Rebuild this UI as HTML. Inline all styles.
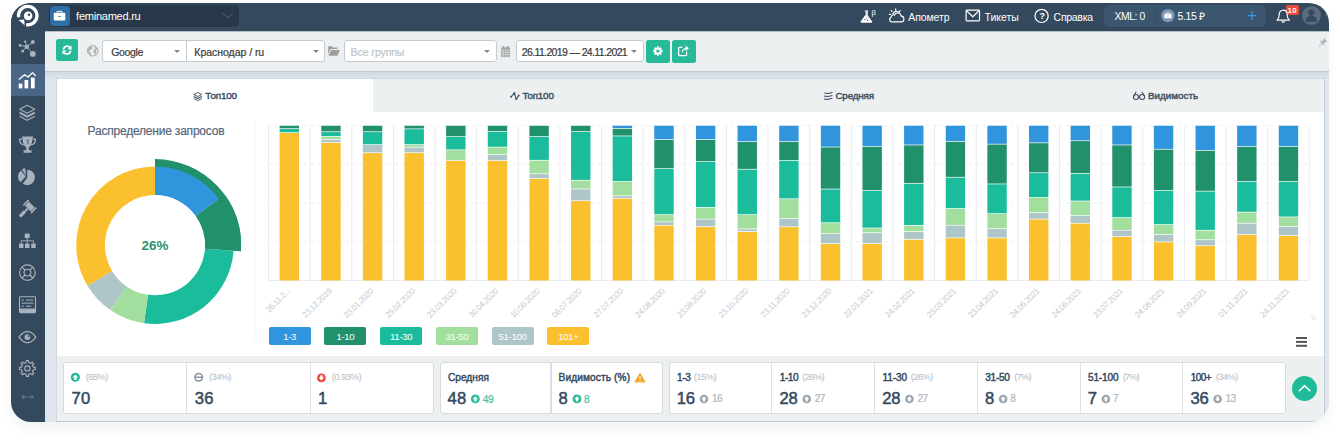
<!DOCTYPE html>
<html lang="ru">
<head>
<meta charset="utf-8">
<title>feminamed.ru — Топ100</title>
<style>
*{box-sizing:border-box;margin:0;padding:0}
html,body{width:1340px;height:442px;background:#fff;overflow:hidden}
body{position:relative;font-family:"Liberation Sans",sans-serif;color:#34495e}
.shadow{position:absolute;left:11px;top:3px;width:1318px;height:418.9px;border-radius:20px;background:#fff;box-shadow:0 8px 14px -3px rgba(40,60,80,.08)}
.clip{position:absolute;left:0;top:0;width:1340px;height:442px;clip-path:inset(3px 11px 20.1px 11px round 20px)}
.abs{position:absolute}
.topbar{left:0;top:0;width:1340px;height:31.3px;background:#34495e}
.sidebar{left:0;top:0;width:45px;height:442px;background:#34495e}
.side-active{left:11px;top:64px;width:34px;height:31.5px;background:#4a6585}
.content{left:45px;top:31px;width:1295px;height:411px;background:#dfe6ed}
.toolbar{left:45px;top:31px;width:1295px;height:41px;background:#ecf0f1;border-bottom:1px solid #bfc8d1}
.toolshadow{left:45px;top:72px;width:1295px;height:7px;background:linear-gradient(#d0d9e2,#dde4ec)}
.panel{left:56px;top:78px;width:1269px;height:344px;background:#ecf0f1;border:1px solid #d0d9e1;border-right-color:#c3ced8;border-bottom-color:#bdc8d3}
.white{left:57px;top:79px;width:1267px;height:276.5px;background:#fff}
.tab{top:79px;height:33px;background:#ecf0f1}
.t{position:absolute;white-space:nowrap;line-height:1}
.pill{left:49px;top:5px;width:190px;height:22px;border-radius:5px;background:#27384a}
.brief{left:49.5px;top:5.5px;width:20px;height:20px;border-radius:4px;background:#2f6fa5}
.xml{left:1104px;top:5px;width:161.5px;height:22px;border-radius:6px;background:#3c5670}
.sel{top:40px;height:22.4px;background:#fff;border:1px solid #c4cbd2}
.gbtn{background:#26b99a;border-radius:2.5px}
.caret{position:absolute;width:0;height:0;border-left:3.7px solid transparent;border-right:3.7px solid transparent;border-top:3.9px solid #858585}
.leg{top:327.2px;width:42px;height:18.2px;border-radius:2px;color:#fff;font-size:9.6px;letter-spacing:-.35px;text-align:center;line-height:19.2px}
.box{top:362.2px;height:52.3px;background:#fff;border:1px solid #d6dadd;border-radius:3px}
.vd{top:363px;width:1.3px;height:51px;background:#dcdfe1}
.big{font-size:16.5px;font-weight:bold;color:#34495e}
.lbl{font-size:10.5px;font-weight:bold;color:#34495e}
.pct{font-size:9.5px;color:#b4bcc3}
.sm{font-size:10px;color:#a9b1b8}
</style>
</head>
<body>
<div class="shadow"></div>
<div class="clip">
<div class="abs content"></div>
<div class="abs toolbar"></div>
<div class="abs toolshadow"></div>
<div class="abs topbar"></div>
<div class="abs" style="left:45px;top:31px;width:1295px;height:1px;background:#b4bdc5"></div>
<div class="abs sidebar"></div>
<div class="abs side-active"></div>

<!-- top bar -->
<div class="abs pill"></div>
<div class="abs brief"></div>
<div class="abs xml"></div>
<div class="abs" style="left:1155.5px;top:9px;width:1px;height:14px;background:#34495e"></div>
<div class="abs" style="left:1285.5px;top:5px;width:13px;height:10px;border-radius:2px;background:#e74c3c"></div>
<div class="abs" style="left:1301.8px;top:6px;width:19.2px;height:19.2px;border-radius:50%;background:#5b6b7c"></div>

<!-- toolbar -->
<div class="abs gbtn" style="left:56px;top:39px;width:22px;height:22px"></div>
<div class="abs sel" style="left:102px;width:84.5px;border-radius:3px 0 0 3px"></div>
<div class="abs sel" style="left:185.5px;width:139.5px;border-radius:0 3px 3px 0"></div>
<div class="caret" style="left:173.8px;top:49.7px"></div>
<div class="caret" style="left:312.6px;top:49.7px"></div>
<div class="abs sel" style="left:344px;width:153px;border-radius:3px"></div>
<div class="caret" style="left:484px;top:49.7px"></div>
<div class="abs sel" style="left:516px;width:128px;border-radius:3px"></div>
<div class="caret" style="left:631px;top:49.7px"></div>
<div class="abs gbtn" style="left:646px;top:39.5px;width:24px;height:23px"></div>
<div class="abs gbtn" style="left:672px;top:39.5px;width:23.5px;height:23px"></div>

<!-- panel -->
<div class="abs panel"></div>
<div class="abs white"></div>
<div class="abs tab" style="left:373.3px;width:950.7px"></div>

<div class="abs" style="left:254px;top:120px;width:1px;height:221px;background:#f0f2f3"></div>

<svg class="chart" width="1340" height="442" viewBox="0 0 1340 442" style="position:absolute;left:0;top:0">
<line x1="268.50" y1="125.8" x2="268.50" y2="280.5" stroke="#e9ecee" stroke-width="1"/>
<line x1="310.13" y1="125.8" x2="310.13" y2="280.5" stroke="#e9ecee" stroke-width="1"/>
<line x1="351.76" y1="125.8" x2="351.76" y2="280.5" stroke="#e9ecee" stroke-width="1"/>
<line x1="393.40" y1="125.8" x2="393.40" y2="280.5" stroke="#e9ecee" stroke-width="1"/>
<line x1="435.03" y1="125.8" x2="435.03" y2="280.5" stroke="#e9ecee" stroke-width="1"/>
<line x1="476.66" y1="125.8" x2="476.66" y2="280.5" stroke="#e9ecee" stroke-width="1"/>
<line x1="518.29" y1="125.8" x2="518.29" y2="280.5" stroke="#e9ecee" stroke-width="1"/>
<line x1="559.92" y1="125.8" x2="559.92" y2="280.5" stroke="#e9ecee" stroke-width="1"/>
<line x1="601.56" y1="125.8" x2="601.56" y2="280.5" stroke="#e9ecee" stroke-width="1"/>
<line x1="643.19" y1="125.8" x2="643.19" y2="280.5" stroke="#e9ecee" stroke-width="1"/>
<line x1="684.82" y1="125.8" x2="684.82" y2="280.5" stroke="#e9ecee" stroke-width="1"/>
<line x1="726.45" y1="125.8" x2="726.45" y2="280.5" stroke="#e9ecee" stroke-width="1"/>
<line x1="768.08" y1="125.8" x2="768.08" y2="280.5" stroke="#e9ecee" stroke-width="1"/>
<line x1="809.72" y1="125.8" x2="809.72" y2="280.5" stroke="#e9ecee" stroke-width="1"/>
<line x1="851.35" y1="125.8" x2="851.35" y2="280.5" stroke="#e9ecee" stroke-width="1"/>
<line x1="892.98" y1="125.8" x2="892.98" y2="280.5" stroke="#e9ecee" stroke-width="1"/>
<line x1="934.61" y1="125.8" x2="934.61" y2="280.5" stroke="#e9ecee" stroke-width="1"/>
<line x1="976.24" y1="125.8" x2="976.24" y2="280.5" stroke="#e9ecee" stroke-width="1"/>
<line x1="1017.88" y1="125.8" x2="1017.88" y2="280.5" stroke="#e9ecee" stroke-width="1"/>
<line x1="1059.51" y1="125.8" x2="1059.51" y2="280.5" stroke="#e9ecee" stroke-width="1"/>
<line x1="1101.14" y1="125.8" x2="1101.14" y2="280.5" stroke="#e9ecee" stroke-width="1"/>
<line x1="1142.77" y1="125.8" x2="1142.77" y2="280.5" stroke="#e9ecee" stroke-width="1"/>
<line x1="1184.40" y1="125.8" x2="1184.40" y2="280.5" stroke="#e9ecee" stroke-width="1"/>
<line x1="1226.04" y1="125.8" x2="1226.04" y2="280.5" stroke="#e9ecee" stroke-width="1"/>
<line x1="1267.67" y1="125.8" x2="1267.67" y2="280.5" stroke="#e9ecee" stroke-width="1"/>
<line x1="1309.30" y1="125.8" x2="1309.30" y2="280.5" stroke="#e9ecee" stroke-width="1"/>
<line x1="268.5" y1="125.75" x2="1309.3" y2="125.75" stroke="#eaedef" stroke-width="1" stroke-dasharray="3 4"/>
<line x1="268.5" y1="164.44" x2="1309.3" y2="164.44" stroke="#eaedef" stroke-width="1" stroke-dasharray="3 4"/>
<line x1="268.5" y1="203.12" x2="1309.3" y2="203.12" stroke="#eaedef" stroke-width="1" stroke-dasharray="3 4"/>
<line x1="268.5" y1="241.81" x2="1309.3" y2="241.81" stroke="#eaedef" stroke-width="1" stroke-dasharray="3 4"/>
<line x1="268.5" y1="280.50" x2="1309.3" y2="280.50" stroke="#eaedef" stroke-width="1"/>
<rect x="279.62" y="125.75" width="19.4" height="2.55" fill="#21916c"/>
<rect x="279.62" y="129.00" width="19.4" height="3.30" fill="#1bbc9b"/>
<rect x="279.62" y="133.00" width="19.4" height="147.50" fill="#fbc02d"/>
<text x="290.52" y="291.70" text-anchor="end" transform="rotate(-45 290.52 291.70)" font-size="8.4" letter-spacing="-0.42" fill="#c6cacf" font-family="Liberation Sans, sans-serif">26.11.2...</text>
<rect x="321.25" y="125.75" width="19.4" height="5.65" fill="#21916c"/>
<rect x="321.25" y="132.10" width="19.4" height="4.00" fill="#1bbc9b"/>
<rect x="321.25" y="136.80" width="19.4" height="2.30" fill="#a2de9e"/>
<rect x="321.25" y="139.80" width="19.4" height="2.40" fill="#aec6c7"/>
<rect x="321.25" y="142.90" width="19.4" height="137.60" fill="#fbc02d"/>
<text x="332.15" y="291.70" text-anchor="end" transform="rotate(-45 332.15 291.70)" font-size="8.4" letter-spacing="-0.42" fill="#c6cacf" font-family="Liberation Sans, sans-serif">23.12.2019</text>
<rect x="362.88" y="125.75" width="19.4" height="5.65" fill="#21916c"/>
<rect x="362.88" y="132.10" width="19.4" height="12.20" fill="#1bbc9b"/>
<rect x="362.88" y="145.00" width="19.4" height="7.40" fill="#aec6c7"/>
<rect x="362.88" y="153.10" width="19.4" height="127.40" fill="#fbc02d"/>
<text x="373.78" y="291.70" text-anchor="end" transform="rotate(-45 373.78 291.70)" font-size="8.4" letter-spacing="-0.42" fill="#c6cacf" font-family="Liberation Sans, sans-serif">23.01.2020</text>
<rect x="404.51" y="125.75" width="19.4" height="2.75" fill="#21916c"/>
<rect x="404.51" y="129.20" width="19.4" height="15.10" fill="#1bbc9b"/>
<rect x="404.51" y="145.00" width="19.4" height="1.90" fill="#a2de9e"/>
<rect x="404.51" y="147.60" width="19.4" height="4.80" fill="#aec6c7"/>
<rect x="404.51" y="153.10" width="19.4" height="127.40" fill="#fbc02d"/>
<text x="415.41" y="291.70" text-anchor="end" transform="rotate(-45 415.41 291.70)" font-size="8.4" letter-spacing="-0.42" fill="#c6cacf" font-family="Liberation Sans, sans-serif">25.02.2020</text>
<rect x="446.14" y="125.75" width="19.4" height="10.55" fill="#21916c"/>
<rect x="446.14" y="137.00" width="19.4" height="12.50" fill="#1bbc9b"/>
<rect x="446.14" y="150.20" width="19.4" height="10.00" fill="#a2de9e"/>
<rect x="446.14" y="160.90" width="19.4" height="119.60" fill="#fbc02d"/>
<text x="457.04" y="291.70" text-anchor="end" transform="rotate(-45 457.04 291.70)" font-size="8.4" letter-spacing="-0.42" fill="#c6cacf" font-family="Liberation Sans, sans-serif">23.03.2020</text>
<rect x="487.78" y="125.75" width="19.4" height="5.45" fill="#21916c"/>
<rect x="487.78" y="131.90" width="19.4" height="14.90" fill="#1bbc9b"/>
<rect x="487.78" y="147.50" width="19.4" height="6.70" fill="#a2de9e"/>
<rect x="487.78" y="154.90" width="19.4" height="5.30" fill="#aec6c7"/>
<rect x="487.78" y="160.90" width="19.4" height="119.60" fill="#fbc02d"/>
<text x="498.68" y="291.70" text-anchor="end" transform="rotate(-45 498.68 291.70)" font-size="8.4" letter-spacing="-0.42" fill="#c6cacf" font-family="Liberation Sans, sans-serif">30.04.2020</text>
<rect x="529.41" y="125.75" width="19.4" height="10.45" fill="#21916c"/>
<rect x="529.41" y="136.90" width="19.4" height="23.00" fill="#1bbc9b"/>
<rect x="529.41" y="160.60" width="19.4" height="12.80" fill="#a2de9e"/>
<rect x="529.41" y="174.10" width="19.4" height="4.10" fill="#aec6c7"/>
<rect x="529.41" y="178.90" width="19.4" height="101.60" fill="#fbc02d"/>
<text x="540.31" y="291.70" text-anchor="end" transform="rotate(-45 540.31 291.70)" font-size="8.4" letter-spacing="-0.42" fill="#c6cacf" font-family="Liberation Sans, sans-serif">10.06.2020</text>
<rect x="571.04" y="125.75" width="19.4" height="5.45" fill="#21916c"/>
<rect x="571.04" y="131.90" width="19.4" height="48.00" fill="#1bbc9b"/>
<rect x="571.04" y="180.60" width="19.4" height="8.00" fill="#a2de9e"/>
<rect x="571.04" y="189.30" width="19.4" height="11.10" fill="#aec6c7"/>
<rect x="571.04" y="201.10" width="19.4" height="79.40" fill="#fbc02d"/>
<text x="581.94" y="291.70" text-anchor="end" transform="rotate(-45 581.94 291.70)" font-size="8.4" letter-spacing="-0.42" fill="#c6cacf" font-family="Liberation Sans, sans-serif">06.07.2020</text>
<rect x="612.67" y="125.75" width="19.4" height="2.35" fill="#3095dc"/>
<rect x="612.67" y="128.80" width="19.4" height="6.80" fill="#21916c"/>
<rect x="612.67" y="136.30" width="19.4" height="44.90" fill="#1bbc9b"/>
<rect x="612.67" y="181.90" width="19.4" height="13.60" fill="#a2de9e"/>
<rect x="612.67" y="196.20" width="19.4" height="1.90" fill="#aec6c7"/>
<rect x="612.67" y="198.80" width="19.4" height="81.70" fill="#fbc02d"/>
<text x="623.57" y="291.70" text-anchor="end" transform="rotate(-45 623.57 291.70)" font-size="8.4" letter-spacing="-0.42" fill="#c6cacf" font-family="Liberation Sans, sans-serif">27.07.2020</text>
<rect x="654.30" y="125.75" width="19.4" height="13.45" fill="#3095dc"/>
<rect x="654.30" y="139.90" width="19.4" height="28.40" fill="#21916c"/>
<rect x="654.30" y="169.00" width="19.4" height="45.30" fill="#1bbc9b"/>
<rect x="654.30" y="215.00" width="19.4" height="6.50" fill="#a2de9e"/>
<rect x="654.30" y="222.20" width="19.4" height="2.80" fill="#aec6c7"/>
<rect x="654.30" y="225.70" width="19.4" height="54.80" fill="#fbc02d"/>
<text x="665.20" y="291.70" text-anchor="end" transform="rotate(-45 665.20 291.70)" font-size="8.4" letter-spacing="-0.42" fill="#c6cacf" font-family="Liberation Sans, sans-serif">24.08.2020</text>
<rect x="695.94" y="125.75" width="19.4" height="13.45" fill="#3095dc"/>
<rect x="695.94" y="139.90" width="19.4" height="21.40" fill="#21916c"/>
<rect x="695.94" y="162.00" width="19.4" height="45.10" fill="#1bbc9b"/>
<rect x="695.94" y="207.80" width="19.4" height="11.00" fill="#a2de9e"/>
<rect x="695.94" y="219.50" width="19.4" height="6.90" fill="#aec6c7"/>
<rect x="695.94" y="227.10" width="19.4" height="53.40" fill="#fbc02d"/>
<text x="706.84" y="291.70" text-anchor="end" transform="rotate(-45 706.84 291.70)" font-size="8.4" letter-spacing="-0.42" fill="#c6cacf" font-family="Liberation Sans, sans-serif">23.09.2020</text>
<rect x="737.57" y="125.75" width="19.4" height="15.55" fill="#3095dc"/>
<rect x="737.57" y="142.00" width="19.4" height="26.90" fill="#21916c"/>
<rect x="737.57" y="169.60" width="19.4" height="44.70" fill="#1bbc9b"/>
<rect x="737.57" y="215.00" width="19.4" height="13.60" fill="#a2de9e"/>
<rect x="737.57" y="229.30" width="19.4" height="2.00" fill="#aec6c7"/>
<rect x="737.57" y="232.00" width="19.4" height="48.50" fill="#fbc02d"/>
<text x="748.47" y="291.70" text-anchor="end" transform="rotate(-45 748.47 291.70)" font-size="8.4" letter-spacing="-0.42" fill="#c6cacf" font-family="Liberation Sans, sans-serif">23.10.2020</text>
<rect x="779.20" y="125.75" width="19.4" height="15.35" fill="#3095dc"/>
<rect x="779.20" y="141.80" width="19.4" height="18.20" fill="#21916c"/>
<rect x="779.20" y="160.70" width="19.4" height="37.75" fill="#1bbc9b"/>
<rect x="779.20" y="199.15" width="19.4" height="19.05" fill="#a2de9e"/>
<rect x="779.20" y="218.90" width="19.4" height="7.55" fill="#aec6c7"/>
<rect x="779.20" y="227.15" width="19.4" height="53.35" fill="#fbc02d"/>
<text x="790.10" y="291.70" text-anchor="end" transform="rotate(-45 790.10 291.70)" font-size="8.4" letter-spacing="-0.42" fill="#c6cacf" font-family="Liberation Sans, sans-serif">23.11.2020</text>
<rect x="820.83" y="125.75" width="19.4" height="20.95" fill="#3095dc"/>
<rect x="820.83" y="147.40" width="19.4" height="41.30" fill="#21916c"/>
<rect x="820.83" y="189.40" width="19.4" height="33.00" fill="#1bbc9b"/>
<rect x="820.83" y="223.10" width="19.4" height="10.20" fill="#a2de9e"/>
<rect x="820.83" y="234.00" width="19.4" height="9.30" fill="#aec6c7"/>
<rect x="820.83" y="244.00" width="19.4" height="36.50" fill="#fbc02d"/>
<text x="831.73" y="291.70" text-anchor="end" transform="rotate(-45 831.73 291.70)" font-size="8.4" letter-spacing="-0.42" fill="#c6cacf" font-family="Liberation Sans, sans-serif">23.12.2020</text>
<rect x="862.46" y="125.75" width="19.4" height="20.35" fill="#3095dc"/>
<rect x="862.46" y="146.80" width="19.4" height="43.40" fill="#21916c"/>
<rect x="862.46" y="190.90" width="19.4" height="36.80" fill="#1bbc9b"/>
<rect x="862.46" y="228.40" width="19.4" height="4.00" fill="#a2de9e"/>
<rect x="862.46" y="233.10" width="19.4" height="10.20" fill="#aec6c7"/>
<rect x="862.46" y="244.00" width="19.4" height="36.50" fill="#fbc02d"/>
<text x="873.36" y="291.70" text-anchor="end" transform="rotate(-45 873.36 291.70)" font-size="8.4" letter-spacing="-0.42" fill="#c6cacf" font-family="Liberation Sans, sans-serif">22.01.2021</text>
<rect x="904.10" y="125.75" width="19.4" height="18.85" fill="#3095dc"/>
<rect x="904.10" y="145.30" width="19.4" height="37.90" fill="#21916c"/>
<rect x="904.10" y="183.90" width="19.4" height="41.10" fill="#1bbc9b"/>
<rect x="904.10" y="225.70" width="19.4" height="5.60" fill="#a2de9e"/>
<rect x="904.10" y="232.00" width="19.4" height="7.10" fill="#aec6c7"/>
<rect x="904.10" y="239.80" width="19.4" height="40.70" fill="#fbc02d"/>
<text x="915.00" y="291.70" text-anchor="end" transform="rotate(-45 915.00 291.70)" font-size="8.4" letter-spacing="-0.42" fill="#c6cacf" font-family="Liberation Sans, sans-serif">24.02.2021</text>
<rect x="945.73" y="125.75" width="19.4" height="15.35" fill="#3095dc"/>
<rect x="945.73" y="141.80" width="19.4" height="35.10" fill="#21916c"/>
<rect x="945.73" y="177.60" width="19.4" height="30.60" fill="#1bbc9b"/>
<rect x="945.73" y="208.90" width="19.4" height="16.00" fill="#a2de9e"/>
<rect x="945.73" y="225.60" width="19.4" height="11.90" fill="#aec6c7"/>
<rect x="945.73" y="238.20" width="19.4" height="42.30" fill="#fbc02d"/>
<text x="956.63" y="291.70" text-anchor="end" transform="rotate(-45 956.63 291.70)" font-size="8.4" letter-spacing="-0.42" fill="#c6cacf" font-family="Liberation Sans, sans-serif">23.03.2021</text>
<rect x="987.36" y="125.75" width="19.4" height="18.05" fill="#3095dc"/>
<rect x="987.36" y="144.50" width="19.4" height="39.10" fill="#21916c"/>
<rect x="987.36" y="184.30" width="19.4" height="29.00" fill="#1bbc9b"/>
<rect x="987.36" y="214.00" width="19.4" height="14.35" fill="#a2de9e"/>
<rect x="987.36" y="229.05" width="19.4" height="8.45" fill="#aec6c7"/>
<rect x="987.36" y="238.20" width="19.4" height="42.30" fill="#fbc02d"/>
<text x="998.26" y="291.70" text-anchor="end" transform="rotate(-45 998.26 291.70)" font-size="8.4" letter-spacing="-0.42" fill="#c6cacf" font-family="Liberation Sans, sans-serif">23.04.2021</text>
<rect x="1028.99" y="125.75" width="19.4" height="16.75" fill="#3095dc"/>
<rect x="1028.99" y="143.20" width="19.4" height="29.20" fill="#21916c"/>
<rect x="1028.99" y="173.10" width="19.4" height="24.10" fill="#1bbc9b"/>
<rect x="1028.99" y="197.90" width="19.4" height="14.50" fill="#a2de9e"/>
<rect x="1028.99" y="213.10" width="19.4" height="5.70" fill="#aec6c7"/>
<rect x="1028.99" y="219.50" width="19.4" height="61.00" fill="#fbc02d"/>
<text x="1039.89" y="291.70" text-anchor="end" transform="rotate(-45 1039.89 291.70)" font-size="8.4" letter-spacing="-0.42" fill="#c6cacf" font-family="Liberation Sans, sans-serif">24.05.2021</text>
<rect x="1070.62" y="125.75" width="19.4" height="14.65" fill="#3095dc"/>
<rect x="1070.62" y="141.10" width="19.4" height="32.00" fill="#21916c"/>
<rect x="1070.62" y="173.80" width="19.4" height="26.90" fill="#1bbc9b"/>
<rect x="1070.62" y="201.40" width="19.4" height="13.90" fill="#a2de9e"/>
<rect x="1070.62" y="216.00" width="19.4" height="6.90" fill="#aec6c7"/>
<rect x="1070.62" y="223.60" width="19.4" height="56.90" fill="#fbc02d"/>
<text x="1081.52" y="291.70" text-anchor="end" transform="rotate(-45 1081.52 291.70)" font-size="8.4" letter-spacing="-0.42" fill="#c6cacf" font-family="Liberation Sans, sans-serif">24.06.2021</text>
<rect x="1112.26" y="125.75" width="19.4" height="18.85" fill="#3095dc"/>
<rect x="1112.26" y="145.30" width="19.4" height="41.35" fill="#21916c"/>
<rect x="1112.26" y="187.35" width="19.4" height="29.90" fill="#1bbc9b"/>
<rect x="1112.26" y="217.95" width="19.4" height="11.95" fill="#a2de9e"/>
<rect x="1112.26" y="230.60" width="19.4" height="5.60" fill="#aec6c7"/>
<rect x="1112.26" y="236.90" width="19.4" height="43.60" fill="#fbc02d"/>
<text x="1123.16" y="291.70" text-anchor="end" transform="rotate(-45 1123.16 291.70)" font-size="8.4" letter-spacing="-0.42" fill="#c6cacf" font-family="Liberation Sans, sans-serif">23.07.2021</text>
<rect x="1153.89" y="125.75" width="19.4" height="23.15" fill="#3095dc"/>
<rect x="1153.89" y="149.60" width="19.4" height="40.60" fill="#21916c"/>
<rect x="1153.89" y="190.90" width="19.4" height="33.35" fill="#1bbc9b"/>
<rect x="1153.89" y="224.95" width="19.4" height="9.35" fill="#a2de9e"/>
<rect x="1153.89" y="235.00" width="19.4" height="6.55" fill="#aec6c7"/>
<rect x="1153.89" y="242.25" width="19.4" height="38.25" fill="#fbc02d"/>
<text x="1164.79" y="291.70" text-anchor="end" transform="rotate(-45 1164.79 291.70)" font-size="8.4" letter-spacing="-0.42" fill="#c6cacf" font-family="Liberation Sans, sans-serif">24.08.2021</text>
<rect x="1195.52" y="125.75" width="19.4" height="24.35" fill="#3095dc"/>
<rect x="1195.52" y="150.80" width="19.4" height="40.00" fill="#21916c"/>
<rect x="1195.52" y="191.50" width="19.4" height="38.40" fill="#1bbc9b"/>
<rect x="1195.52" y="230.60" width="19.4" height="8.80" fill="#a2de9e"/>
<rect x="1195.52" y="240.10" width="19.4" height="5.30" fill="#aec6c7"/>
<rect x="1195.52" y="246.10" width="19.4" height="34.40" fill="#fbc02d"/>
<text x="1206.42" y="291.70" text-anchor="end" transform="rotate(-45 1206.42 291.70)" font-size="8.4" letter-spacing="-0.42" fill="#c6cacf" font-family="Liberation Sans, sans-serif">24.09.2021</text>
<rect x="1237.15" y="125.75" width="19.4" height="20.40" fill="#3095dc"/>
<rect x="1237.15" y="146.85" width="19.4" height="34.35" fill="#21916c"/>
<rect x="1237.15" y="181.90" width="19.4" height="29.85" fill="#1bbc9b"/>
<rect x="1237.15" y="212.45" width="19.4" height="10.45" fill="#a2de9e"/>
<rect x="1237.15" y="223.60" width="19.4" height="10.70" fill="#aec6c7"/>
<rect x="1237.15" y="235.00" width="19.4" height="45.50" fill="#fbc02d"/>
<text x="1248.05" y="291.70" text-anchor="end" transform="rotate(-45 1248.05 291.70)" font-size="8.4" letter-spacing="-0.42" fill="#c6cacf" font-family="Liberation Sans, sans-serif">01.11.2021</text>
<rect x="1278.78" y="125.75" width="19.4" height="20.45" fill="#3095dc"/>
<rect x="1278.78" y="146.90" width="19.4" height="34.30" fill="#21916c"/>
<rect x="1278.78" y="181.90" width="19.4" height="34.70" fill="#1bbc9b"/>
<rect x="1278.78" y="217.30" width="19.4" height="9.00" fill="#a2de9e"/>
<rect x="1278.78" y="227.00" width="19.4" height="8.30" fill="#aec6c7"/>
<rect x="1278.78" y="236.00" width="19.4" height="44.50" fill="#fbc02d"/>
<text x="1289.68" y="291.70" text-anchor="end" transform="rotate(-45 1289.68 291.70)" font-size="8.4" letter-spacing="-0.42" fill="#c6cacf" font-family="Liberation Sans, sans-serif">24.11.2021</text>
</svg>
<svg width="1340" height="442" viewBox="0 0 1340 442" style="position:absolute;left:0;top:0">
<path d="M233.56 250.69A78.75 78.75 0 0 1 144.04 323.18L148.03 294.81A50.1 50.1 0 0 0 204.98 248.69Z" fill="#1bbc9b"/>
<path d="M144.04 323.18A78.75 78.75 0 0 1 110.28 310.02L126.55 286.44A50.1 50.1 0 0 0 148.03 294.81Z" fill="#a2de9e"/>
<path d="M110.28 310.02A78.75 78.75 0 0 1 87.50 285.76L112.06 271.00A50.1 50.1 0 0 0 126.55 286.44Z" fill="#aec6c7"/>
<path d="M87.50 285.76A78.75 78.75 0 0 1 155.00 166.45L155.00 195.10A50.1 50.1 0 0 0 112.06 271.00Z" fill="#fbc02d"/>
<path d="M224.66 194.59A86.1 86.1 0 0 1 240.89 251.21L204.98 248.69A50.1 50.1 0 0 0 195.53 215.75Z" fill="#21916c"/>
<path d="M155.00 159.10A86.1 86.1 0 0 1 240.89 251.21L232.56 250.62A77.75 77.75 0 0 0 155.00 167.45Z" fill="#21916c"/>
<path d="M155.00 166.45A78.75 78.75 0 0 1 218.71 198.91L195.53 215.75A50.1 50.1 0 0 0 155.00 195.10Z" fill="#3095dc"/>
<text x="155" y="250.1" text-anchor="middle" font-size="13.4" font-weight="bold" fill="#2a916f" font-family="Liberation Sans, sans-serif">26%</text>
</svg>

<!-- legend -->
<div class="abs leg" style="left:268.7px;background:#3095dc">1-3</div>
<div class="abs leg" style="left:324.4px;background:#21916c">1-10</div>
<div class="abs leg" style="left:380.1px;background:#1bbc9b">11-30</div>
<div class="abs leg" style="left:435.8px;background:#a2de9e">31-50</div>
<div class="abs leg" style="left:491.5px;background:#aec6c7">51-100</div>
<div class="abs leg" style="left:547.3px;background:#fbc02d">101+</div>
<div class="abs" style="left:1295.8px;top:336.6px;width:11.6px;height:2px;background:#555;box-shadow:0 3.9px 0 #555,0 7.8px 0 #555"></div>

<!-- stats -->
<div class="abs box" style="left:63px;width:370.5px"></div>
<div class="abs vd" style="left:186.2px"></div>
<div class="abs vd" style="left:309.6px"></div>
<div class="abs box" style="left:440px;width:223px"></div>
<div class="abs vd" style="left:550.4px"></div>
<div class="abs box" style="left:669px;width:617px"></div>
<div class="abs vd" style="left:771.1px"></div>
<div class="abs vd" style="left:873.9px"></div>
<div class="abs vd" style="left:976.6px"></div>
<div class="abs vd" style="left:1079.5px"></div>
<div class="abs vd" style="left:1181.9px"></div>




<div class="abs" style="left:1291.7px;top:376px;width:25.3px;height:25.3px;border-radius:50%;background:#1fbb98"></div>

<div class="t" style="left:76.10px;top:11.15px;font-size:11.1px;color:#fff;letter-spacing:-0.288px;">feminamed.ru</div>
<div class="t" style="left:1039.40px;top:12.38px;font-size:9px;color:#fff;letter-spacing:0.000px;font-weight:bold;">?</div>
<div class="t" style="left:871.50px;top:9.27px;font-size:7.6px;color:#fff;letter-spacing:0.000px;">β</div>
<div class="t" style="left:908.30px;top:11.66px;font-size:10.5px;color:#fff;letter-spacing:-0.115px;">Апометр</div>
<div class="t" style="left:984.50px;top:11.66px;font-size:10.5px;color:#fff;letter-spacing:-0.016px;">Тикеты</div>
<div class="t" style="left:1053.60px;top:11.66px;font-size:10.5px;color:#fff;letter-spacing:-0.298px;">Справка</div>
<div class="t" style="left:1114.50px;top:11.90px;font-size:10.4px;color:#fff;letter-spacing:-0.430px;">XML: 0</div>
<div class="t" style="left:1177.50px;top:11.80px;font-size:10.4px;color:#fff;letter-spacing:-0.286px;">5.15 ₽</div>
<div class="t" style="left:1287.60px;top:7.23px;font-size:8px;color:#fff;letter-spacing:0.101px;font-weight:bold;">10</div>
<div class="t" style="left:111.30px;top:47.21px;font-size:10.5px;color:#3a3a3a;letter-spacing:-0.352px;-webkit-text-stroke:.2px;">Google</div>
<div class="t" style="left:194.30px;top:47.21px;font-size:10.5px;color:#3a3a3a;letter-spacing:-0.034px;-webkit-text-stroke:.2px;">Краснодар / ru</div>
<div class="t" style="left:350.60px;top:47.21px;font-size:10.5px;color:#c0c4c8;letter-spacing:-0.103px;-webkit-text-stroke:.2px;">Все группы</div>
<div class="t" style="left:521.80px;top:47.21px;font-size:10.5px;color:#3a3a3a;letter-spacing:-0.635px;-webkit-text-stroke:.2px;">26.11.2019 — 24.11.2021</div>
<div class="t" style="left:205.30px;top:90.86px;font-size:9.85px;color:#3b4e63;letter-spacing:-0.139px;-webkit-text-stroke:0.42px;">Топ100</div>
<div class="t" style="left:522.40px;top:90.86px;font-size:9.85px;color:#3b4e63;letter-spacing:-0.199px;-webkit-text-stroke:0.42px;">Топ100</div>
<div class="t" style="left:835.40px;top:90.86px;font-size:9.85px;color:#3b4e63;letter-spacing:-0.168px;-webkit-text-stroke:0.42px;">Средняя</div>
<div class="t" style="left:1147.90px;top:90.86px;font-size:9.85px;color:#3b4e63;letter-spacing:0.007px;-webkit-text-stroke:0.42px;">Видимость</div>
<div class="t" style="left:87.60px;top:124.99px;font-size:12.0px;color:#566779;letter-spacing:-0.208px;-webkit-text-stroke:.2px;">Распределение запросов</div>
<div class="t" style="left:85.80px;top:372.17px;font-size:9.6px;color:#b3bcc5;letter-spacing:-0.777px;">(65%)</div>
<div class="t" style="left:71.60px;top:390.95px;font-size:16.6px;color:#34495e;letter-spacing:0.135px;-webkit-text-stroke:0.50px;">70</div>
<div class="t" style="left:209.00px;top:372.17px;font-size:9.6px;color:#b3bcc5;letter-spacing:-0.777px;">(34%)</div>
<div class="t" style="left:194.80px;top:390.95px;font-size:16.6px;color:#34495e;letter-spacing:0.135px;-webkit-text-stroke:0.50px;">36</div>
<div class="t" style="left:331.70px;top:372.17px;font-size:9.6px;color:#b3bcc5;letter-spacing:-0.586px;">(0.93%)</div>
<div class="t" style="left:318.00px;top:390.95px;font-size:16.6px;color:#34495e;letter-spacing:0.000px;-webkit-text-stroke:0.50px;">1</div>
<div class="t" style="left:447.90px;top:372.90px;font-size:10.1px;color:#34495e;letter-spacing:0.047px;-webkit-text-stroke:0.42px;">Средняя</div>
<div class="t" style="left:447.60px;top:390.95px;font-size:16.6px;color:#34495e;letter-spacing:0.135px;-webkit-text-stroke:0.50px;">48</div>
<div class="t" style="left:482.80px;top:394.67px;font-size:10.2px;color:#3cc1a3;letter-spacing:-0.546px;-webkit-text-stroke:.2px;">49</div>
<div class="t" style="left:558.60px;top:372.90px;font-size:10.1px;color:#34495e;letter-spacing:0.131px;-webkit-text-stroke:0.42px;">Видимость (%)</div>
<div class="t" style="left:558.60px;top:390.95px;font-size:16.6px;color:#34495e;letter-spacing:0.000px;-webkit-text-stroke:0.50px;">8</div>
<div class="t" style="left:584.10px;top:394.67px;font-size:10.2px;color:#3cc1a3;letter-spacing:0.000px;-webkit-text-stroke:.2px;">8</div>
<div class="t" style="left:677.10px;top:372.90px;font-size:10.1px;color:#34495e;letter-spacing:-0.399px;-webkit-text-stroke:0.42px;">1-3</div>
<div class="t" style="left:693.80px;top:372.17px;font-size:9.6px;color:#b3bcc5;letter-spacing:-0.652px;">(15%)</div>
<div class="t" style="left:676.80px;top:390.95px;font-size:16.6px;color:#34495e;letter-spacing:-0.165px;-webkit-text-stroke:0.50px;">16</div>
<div class="t" style="left:712.00px;top:394.45px;font-size:10.1px;color:#aeb6be;letter-spacing:-0.635px;-webkit-text-stroke:.2px;">16</div>
<div class="t" style="left:779.82px;top:372.90px;font-size:10.1px;color:#34495e;letter-spacing:-0.472px;-webkit-text-stroke:0.42px;">1-10</div>
<div class="t" style="left:802.22px;top:372.17px;font-size:9.6px;color:#b3bcc5;letter-spacing:-0.777px;">(26%)</div>
<div class="t" style="left:779.52px;top:390.95px;font-size:16.6px;color:#34495e;letter-spacing:-0.165px;-webkit-text-stroke:0.50px;">28</div>
<div class="t" style="left:814.72px;top:394.45px;font-size:10.1px;color:#aeb6be;letter-spacing:-0.635px;-webkit-text-stroke:.2px;">27</div>
<div class="t" style="left:882.54px;top:372.90px;font-size:10.1px;color:#34495e;letter-spacing:-0.125px;-webkit-text-stroke:0.42px;">11-30</div>
<div class="t" style="left:910.72px;top:372.17px;font-size:9.6px;color:#b3bcc5;letter-spacing:-0.777px;">(26%)</div>
<div class="t" style="left:882.24px;top:390.95px;font-size:16.6px;color:#34495e;letter-spacing:-0.165px;-webkit-text-stroke:0.50px;">28</div>
<div class="t" style="left:917.44px;top:394.45px;font-size:10.1px;color:#aeb6be;letter-spacing:-0.635px;-webkit-text-stroke:.2px;">27</div>
<div class="t" style="left:985.26px;top:372.90px;font-size:10.1px;color:#34495e;letter-spacing:-0.283px;-webkit-text-stroke:0.42px;">31-50</div>
<div class="t" style="left:1014.36px;top:372.17px;font-size:9.6px;color:#b3bcc5;letter-spacing:-0.956px;">(7%)</div>
<div class="t" style="left:984.96px;top:390.95px;font-size:16.6px;color:#34495e;letter-spacing:0.000px;-webkit-text-stroke:0.50px;">8</div>
<div class="t" style="left:1010.36px;top:394.45px;font-size:10.1px;color:#aeb6be;letter-spacing:0.000px;-webkit-text-stroke:.2px;">8</div>
<div class="t" style="left:1087.98px;top:372.90px;font-size:10.1px;color:#34495e;letter-spacing:-0.170px;-webkit-text-stroke:0.42px;">51-100</div>
<div class="t" style="left:1122.63px;top:372.17px;font-size:9.6px;color:#b3bcc5;letter-spacing:-1.023px;">(7%)</div>
<div class="t" style="left:1087.68px;top:390.95px;font-size:16.6px;color:#34495e;letter-spacing:0.000px;-webkit-text-stroke:0.50px;">7</div>
<div class="t" style="left:1113.08px;top:394.45px;font-size:10.1px;color:#aeb6be;letter-spacing:0.000px;-webkit-text-stroke:.2px;">7</div>
<div class="t" style="left:1190.70px;top:372.90px;font-size:10.1px;color:#34495e;letter-spacing:-0.583px;-webkit-text-stroke:0.42px;">100+</div>
<div class="t" style="left:1215.80px;top:372.17px;font-size:9.6px;color:#b3bcc5;letter-spacing:-0.827px;">(34%)</div>
<div class="t" style="left:1190.40px;top:390.95px;font-size:16.6px;color:#34495e;letter-spacing:-0.165px;-webkit-text-stroke:0.50px;">36</div>
<div class="t" style="left:1225.60px;top:394.45px;font-size:10.1px;color:#aeb6be;letter-spacing:-0.635px;-webkit-text-stroke:.2px;">13</div>
<svg width="1340" height="442" viewBox="0 0 1340 442" style="position:absolute;left:0;top:0" fill="none">
<g stroke="#fff" fill="none"><path d="M18.64 17.21A9.25 9.25 0 1 1 26.14 24.71" stroke-width="3.3"/></g>
<circle cx="28.1" cy="15.9" r="4.3" fill="#fff"/><circle cx="29" cy="14.7" r="1.25" fill="#34495e"/>
<path d="M18.5 20.1L24.2 19.5L24.6 25.2Z" fill="#fff"/>
<g fill="#a7b2be" stroke="#a7b2be" stroke-width="0.9"><path d="M26.8 46.7L32.8 42M26.8 46.7L32.8 53.9M26.8 46.7L20.1 45.4M26.8 46.7L25.2 41.6M26.8 46.7L22.7 51" fill="none"/><circle cx="26.8" cy="46.7" r="2.3" stroke="none"/><circle cx="32.8" cy="42" r="1.9" stroke="none"/><circle cx="32.8" cy="53.9" r="2.9" stroke="none"/><circle cx="20.1" cy="45.4" r="1.4" stroke="none"/><circle cx="25.2" cy="41.6" r="1.2" stroke="none"/><circle cx="22.7" cy="51" r="1.5" stroke="none"/></g>
<g fill="#fff"><rect x="18.7" y="83.6" width="3.7" height="4.8"/><rect x="24.5" y="80" width="3.7" height="8.4"/><rect x="30.9" y="77.6" width="3.8" height="10.8"/></g>
<path d="M18.9 79.4L24.6 74.8L28.1 77L32.6 72.6L35.6 75.8" stroke="#fff" stroke-width="1.3" fill="none" stroke-linejoin="round"/>
<g stroke="#a7b2be" fill="none" stroke-linejoin="round"><path d="M27.2 105.2L34.8 109.2L27.2 113.2L19.6 109.2Z" stroke-width="1.1"/><path d="M19.6 112.6L27.2 116.6L34.8 112.6" stroke-width="1.9"/><path d="M19.6 116.3L27.2 120.3L34.8 116.3" stroke-width="1.1"/></g>
<g fill="#a7b2be"><path d="M22 136.6h11v1.5h-0.6c0 5-1.3 8-3.6 9.2v3h2.7v2.5h-8v-2.5h2.7v-3c-2.3-1.2-3.6-4.2-3.6-9.2H22z"/><path d="M22.6 139.2h-3c0 3.2 1.6 5.2 4.2 5.6M32.4 139.2h3c0 3.2-1.6 5.2-4.2 5.6" stroke="#a7b2be" stroke-width="1.3" fill="none"/></g>
<path d="M26.9 140.3l1-0.6v4.4" stroke="#34495e" stroke-width="0.9" fill="none"/>
<path d="M27.2 177.4L27.20 169.70A7.7 7.7 0 1 1 22.78 183.71Z" fill="#a7b2be"/>
<path d="M25.7 176.5L20.55 182.22A7.7 7.7 0 0 1 20.96 170.43Z" fill="#a7b2be"/>
<path d="M26.0 176.0L21.92 169.47A7.7 7.7 0 0 1 25.20 168.34Z" fill="#a7b2be"/>
<g transform="translate(0.2 0.2) rotate(45 27.4 208.6)" fill="#a7b2be"><rect x="21.2" y="201.6" width="1.6" height="7.6" rx="0.5"/><rect x="23.3" y="202.6" width="8.2" height="5.6"/><rect x="32" y="201.6" width="1.6" height="7.6" rx="0.5"/><rect x="26.4" y="208.2" width="2" height="4"/><rect x="25.8" y="212.2" width="3.2" height="7.4" rx="0.9"/></g>
<g fill="#a7b2be"><rect x="24.7" y="233.4" width="5" height="4.6" rx="0.6"/><rect x="19" y="243.4" width="4.5" height="4.6" rx="0.6"/><rect x="25" y="243.4" width="4.5" height="4.6" rx="0.6"/><rect x="31.2" y="243.4" width="4.5" height="4.6" rx="0.6"/></g><path d="M27.2 238v5.4M21.2 243.4v-2.6h12.3v2.6" stroke="#a7b2be" stroke-width="0.9" fill="none"/>
<g stroke="#a7b2be" stroke-width="1.15" fill="none"><circle cx="27.4" cy="272.6" r="7.8"/><circle cx="27.4" cy="272.6" r="3.4"/><path d="M21.9 267.1l3.1 3.1M32.9 267.1l-3.1 3.1M21.9 278.1l3.1-3.1M32.9 278.1l-3.1-3.1"/></g>
<g stroke="#a7b2be" fill="none"><rect x="19.5" y="296.8" width="16" height="15.8" rx="0.8" stroke-width="1.1"/><path d="M19.5 310.2h16" stroke-width="3.4"/><path d="M21.6 300h2.2M26 300h7.2M21.6 303.1h11.6M21.6 306.2h2.2M26 306.2h5.2" stroke-width="1"/></g>
<g stroke="#a7b2be" stroke-width="1.2" fill="none"><path d="M19 337.1C21.6 333.2 24.4 331.6 27.4 331.6S33.2 333.2 35.8 337.1C33.2 341 30.4 342.6 27.4 342.6S21.6 341 19 337.1Z"/></g><circle cx="27.4" cy="337.1" r="2.9" fill="#a7b2be"/><circle cx="28.6" cy="336" r="1" fill="#34495e"/>
<path d="M33.26 367.09L35.33 367.34L35.33 369.46L33.26 369.71L32.47 371.61L33.76 373.25L32.25 374.76L30.61 373.47L28.71 374.26L28.46 376.33L26.34 376.33L26.09 374.26L24.19 373.47L22.55 374.76L21.04 373.25L22.33 371.61L21.54 369.71L19.47 369.46L19.47 367.34L21.54 367.09L22.33 365.19L21.04 363.55L22.55 362.04L24.19 363.33L26.09 362.54L26.34 360.47L28.46 360.47L28.71 362.54L30.61 363.33L32.25 362.04L33.76 363.55L32.47 365.19Z" stroke="#a7b2be" stroke-width="1.15" fill="none" stroke-linejoin="round"/><circle cx="27.4" cy="368.4" r="2.6" stroke="#a7b2be" stroke-width="1.15" fill="none"/>
<path d="M22 397h4.9M28.3 397h4.9M23.8 395.2l-1.9 1.8l1.9 1.8M31.4 395.2l1.9 1.8l-1.9 1.8" stroke="#73869a" stroke-width="1" fill="none"/>
<g fill="#fff"><rect x="53.75" y="12.80" width="11.50" height="3.30" rx="0.80"/><rect x="53.75" y="16.80" width="11.50" height="3.60" rx="0.80"/><rect x="53.75" y="15.20" width="4.40" height="2.60"/><rect x="60.85" y="15.20" width="4.40" height="2.60"/><path d="M57.10 12.80v-1.50h4.80v1.50" stroke="#fff" stroke-width="1.00" fill="none"/></g>
<path d="M222.2 12.6l5.4 5.2l5.4-5.2" stroke="#43596f" stroke-width="1.2" fill="none"/>
<g fill="#fff"><path d="M864.6 10.4h3.6v0.9h-0.5v3.9l4.4 6.3c0.4 0.6 0 1.2-0.7 1.2h-10c-0.7 0-1.1-0.6-0.7-1.2l4.4-6.3v-3.9h-0.5z"/></g>
<g fill="#34495e"><circle cx="865" cy="19.6" r="0.7"/><circle cx="867.6" cy="20.4" r="0.6"/><circle cx="866.6" cy="18" r="0.5"/></g>
<path d="M865.6 11.6v3.7" stroke="#34495e" stroke-width="0.7"/>
<g stroke="#fff" stroke-width="1.15" fill="none" stroke-linecap="round"><path d="M892.6 21.9h8.2a2.9 2.9 0 0 0 0.4-5.8a3.6 3.6 0 0 0-6.8-1.1a2.6 2.6 0 0 0-3.4 2.6a2.3 2.3 0 0 0 1.6 4.3z"/><path d="M892.9 13.8a3.6 3.6 0 0 1 6.4-0.9M895.7 8.9v1.3M891.1 10.6l0.9 0.9M900.3 10.6l-0.9 0.9M889.4 14.4h1.2"/></g>
<g stroke="#fff" stroke-width="1.2" fill="none" stroke-linejoin="round"><rect x="966.1" y="10.2" width="13.4" height="10.6" rx="0.8"/><path d="M966.4 10.6l6.4 6.2l6.4-6.2"/></g>
<circle cx="1041.6" cy="15.9" r="6.6" stroke="#fff" stroke-width="1.2" fill="none"/>
<circle cx="1167.9" cy="15.6" r="6.7" fill="#7e96b2"/>
<g fill="#fff"><rect x="1164.34" y="13.66" width="7.13" height="2.05" rx="0.50"/><rect x="1164.34" y="16.14" width="7.13" height="2.23" rx="0.50"/><rect x="1164.34" y="15.15" width="2.73" height="1.61"/><rect x="1168.74" y="15.15" width="2.73" height="1.61"/><path d="M1166.41 13.66v-0.93h2.98v0.93" stroke="#fff" stroke-width="0.62" fill="none"/></g>
<path d="M1247.6 15.6h8.6M1251.9 11.3v8.6" stroke="#2f9fe3" stroke-width="1.25"/>
<path d="M1283.2 10.2c-2.6 0-4 2-4 4.6c0 2.6-0.7 4.2-2.2 5.4h12.4c-1.5-1.2-2.2-2.8-2.2-5.4c0-2.6-1.4-4.6-4-4.6zM1281.8 21.2a1.5 1.5 0 0 0 2.8 0" stroke="#fff" stroke-width="1.15" fill="none" stroke-linejoin="round"/>
<g fill="#34495e"><circle cx="1311.3" cy="12.6" r="3.1"/><path d="M1305.6 21.2c0-3.6 2.2-5.2 5.7-5.2s5.7 1.6 5.7 5.2v0.6h-11.4z"/></g>
<path d="M1324.6 14.4l1.8 2l1.8-2z" fill="#5b6b7c"/>
<g transform="rotate(45 1322.6 42.8)" fill="#a9b0b7"><rect x="1320.4" y="38.4" width="4.4" height="1.2"/><rect x="1321.1" y="39.6" width="3" height="3.2"/><rect x="1319.8" y="42.8" width="5.6" height="1.1"/><rect x="1322.25" y="43.9" width="0.7" height="4"/></g>
<g stroke="#fff" stroke-width="1.75" fill="none"><path d="M63.5 49.5A3.65 3.65 0 0 1 70.1 47.7"/><path d="M70.6 50.6A3.65 3.65 0 0 1 64 52.4"/></g><path d="M71.6 45.5v4.1h-4.1zM62.5 54.6v-4.1h4.1z" fill="#fff"/>
<g stroke="#a3a3a3" stroke-width="0.95" fill="none"><circle cx="92.7" cy="50.8" r="5.25"/></g><g fill="#b0b0b0"><path d="M89.3 47.2l2.3-0.9l1.2 1.4l-1 1.6l-1.7 0.5l-0.6 1.8l1.6 1.6l0.2 2l-1.4-0.6l-1.6-2.8l-0.2-2.6z"/><path d="M94.6 46.3l2 1.2l1.1 2.3l-1.4-0.3l-0.7 1.3l0.9 1.5l-0.6 2l-1.3 0.8l-0.3-2.2l-1.2-1.5l0.9-1.8l1.4-0.8z"/></g>
<g fill="#9e9e9e"><path d="M328.2 46.2h3.6l1.1 1.2h4.6v1.7h-6.9l-2.4 5.4z"/><path d="M331.1 49.9h8.9l-2.5 5.8h-8.9z"/></g>
<g fill="#a2a2a2"><rect x="501.2" y="47.3" width="8.8" height="9.6" rx="0.7"/><rect x="502.9" y="45.7" width="1.2" height="2.6" rx="0.5"/><rect x="507.1" y="45.7" width="1.2" height="2.6" rx="0.5"/></g><g stroke="#ecf0f1" stroke-width="0.55"><path d="M501.2 50h8.8M501.2 52.3h8.8M501.2 54.6h8.8M503.4 50v6.9M505.6 50v6.9M507.8 50v6.9"/></g>
<path d="M661.21 50.31L662.45 50.45L662.45 51.75L661.21 51.89L660.80 52.88L661.58 53.86L660.66 54.78L659.68 54.00L658.69 54.41L658.55 55.65L657.25 55.65L657.11 54.41L656.12 54.00L655.14 54.78L654.22 53.86L655.00 52.88L654.59 51.89L653.35 51.75L653.35 50.45L654.59 50.31L655.00 49.32L654.22 48.34L655.14 47.42L656.12 48.20L657.11 47.79L657.25 46.55L658.55 46.55L658.69 47.79L659.68 48.20L660.66 47.42L661.58 48.34L660.80 49.32Z" fill="#fff" stroke="#fff" stroke-width="0.6" stroke-linejoin="round"/><circle cx="657.9" cy="51.1" r="1.7" fill="#26b99a"/>
<g stroke="#fff" fill="none" stroke-width="1.3" stroke-linejoin="round"><path d="M686.6 51.6v3.2a0.8 0.8 0 0 1-0.8 0.8h-6.4a0.8 0.8 0 0 1-0.8-0.8v-6.6a0.8 0.8 0 0 1 0.8-0.8h3"/><path d="M682.4 52c0.3-2.4 1.6-3.6 4.2-3.7" stroke-width="1.2"/></g><path d="M685.6 45.6l3.3 2.7l-3.3 2.7z" fill="#fff"/>
<g stroke="#3b4e63" fill="none" stroke-linejoin="round"><path d="M197.8 92.5l4.1 2l-4.1 2l-4.1-2z" stroke-width="0.9"/><path d="M193.7 96.5l4.1 2l4.1-2" stroke-width="1.3"/><path d="M193.7 98.6l4.1 2l4.1-2" stroke-width="0.9"/></g>
<path d="M511.1 96.8L514.4 93L516.3 99.2L518.75 95.4" stroke="#3b4e63" stroke-width="1.05" fill="none" stroke-linejoin="round"/><g fill="#3b4e63"><circle cx="511.1" cy="96.8" r="1"/><circle cx="514.4" cy="93" r="0.9"/><circle cx="516.3" cy="99.2" r="0.9"/><circle cx="518.75" cy="95.4" r="0.9"/></g>
<g stroke="#3b4e63" stroke-width="1.1" fill="none"><path d="M824.4 93.1c2.2 0.8 4.6 0.6 8-0.6M824 96c2.2 0.8 4.8 0.6 8.4-0.6M824 98.9c2.2 0.8 4.8 0.6 8.4-0.6"/></g>
<g stroke="#3b4e63" stroke-width="1.05" fill="none"><circle cx="1136" cy="96.9" r="2.5"/><circle cx="1142.1" cy="96.9" r="2.5"/><path d="M1133.6 96.2l2.6-4.4M1144.5 96.2l-2.6-4.4M1138.5 96.3h1.1"/></g>
<circle cx="75.35" cy="377.25" r="4.55" fill="#26b99a"/><path d="M75.35 374.52L78.18 377.55H76.46V379.98H74.24V377.55H72.52Z" fill="#fff"/>
<circle cx="198.65" cy="377.25" r="3.75" fill="none" stroke="#8995a1" stroke-width="1.6"/><path d="M195.1 377.25h7.1" stroke="#8995a1" stroke-width="1.5"/>
<circle cx="321.4" cy="377.9" r="4.4" fill="#e74c3c"/><path d="M321.4 380.54L324.14 377.61H322.48V375.26H320.32V377.61H318.66Z" fill="#fff"/>
<circle cx="475.35" cy="398.95" r="4.4" fill="#26b99a"/><path d="M475.35 396.31L478.09 399.24H476.43V401.59H474.27V399.24H472.61Z" fill="#fff"/>
<circle cx="577.0" cy="398.95" r="4.4" fill="#26b99a"/><path d="M577.0 396.31L579.74 399.24H578.08V401.59H575.92V399.24H574.26Z" fill="#fff"/>
<circle cx="704.0" cy="398.95" r="4.3" fill="#98a3ae"/><path d="M704.0 396.37L706.68 399.24H705.05V401.53H702.95V399.24H701.32Z" fill="#fff"/>
<circle cx="806.72" cy="398.95" r="4.3" fill="#98a3ae"/><path d="M806.72 396.37L809.40 399.24H807.77V401.53H805.67V399.24H804.04Z" fill="#fff"/>
<circle cx="909.44" cy="398.95" r="4.3" fill="#98a3ae"/><path d="M909.44 396.37L912.12 399.24H910.49V401.53H908.39V399.24H906.76Z" fill="#fff"/>
<circle cx="1003.16" cy="398.95" r="4.3" fill="#98a3ae"/><path d="M1003.16 396.37L1005.84 399.24H1004.21V401.53H1002.11V399.24H1000.48Z" fill="#fff"/>
<circle cx="1105.88" cy="398.95" r="4.3" fill="#98a3ae"/><path d="M1105.88 396.37L1108.56 399.24H1106.93V401.53H1104.83V399.24H1103.20Z" fill="#fff"/>
<circle cx="1217.6" cy="398.95" r="4.3" fill="#98a3ae"/><path d="M1217.6 401.53L1220.28 398.66H1218.65V396.37H1216.55V398.66H1214.92Z" fill="#fff"/>
<path d="M640 373.2l5.1 8.8h-10.2z" fill="#f5a623" stroke="#f5a623" stroke-width="0.8" stroke-linejoin="round"/><path d="M640 376v3.2M640 380.2v1" stroke="#fff" stroke-width="1.1"/>
<path d="M1298.9 391.3l5.7-5.7l5.7 5.7" stroke="#fff" stroke-width="1.5" fill="none"/>
<path d="M1310.5 314.8l2.6 2.8l-0.4 2.6M1313 314.2l2.6 2.8l-0.4 2.6" stroke="#d3d7db" stroke-width="0.8" fill="none"/>
</svg>
</div>
</body>
</html>
